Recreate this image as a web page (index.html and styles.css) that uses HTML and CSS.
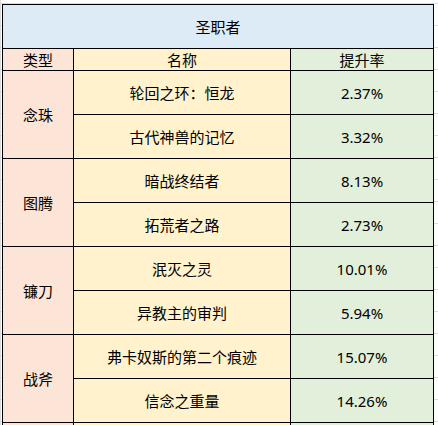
FILE: index.html
```html
<!DOCTYPE html>
<html lang="zh">
<head>
<meta charset="utf-8">
<title>圣职者</title>
<link rel="stylesheet" href="styles.css">
</head>
<body>
<div class="sheet">
<table class="grid">
  <colgroup>
    <col class="c-type">
    <col class="c-name">
    <col class="c-rate">
  </colgroup>
  <tr class="r-title"><td class="title" colspan="3">圣职者</td></tr>
  <tr class="r-head">
    <td class="type">类型</td>
    <td class="name">名称</td>
    <td class="rate">提升率</td>
  </tr>
  <tr class="r-data"><td class="type" rowspan="2">念珠</td><td class="name">轮回之环：恒龙</td><td class="rate">2.37%</td></tr>
  <tr class="r-data"><td class="name">古代神兽的记忆</td><td class="rate">3.32%</td></tr>
  <tr class="r-data"><td class="type" rowspan="2">图腾</td><td class="name">暗战终结者</td><td class="rate">8.13%</td></tr>
  <tr class="r-data"><td class="name">拓荒者之路</td><td class="rate">2.73%</td></tr>
  <tr class="r-data"><td class="type" rowspan="2">镰刀</td><td class="name">泯灭之灵</td><td class="rate">10.01%</td></tr>
  <tr class="r-data"><td class="name">异教主的审判</td><td class="rate">5.94%</td></tr>
  <tr class="r-data"><td class="type" rowspan="2">战斧</td><td class="name">弗卡奴斯的第二个痕迹</td><td class="rate">15.07%</td></tr>
  <tr class="r-data"><td class="name">信念之重量</td><td class="rate">14.26%</td></tr>
  <tr class="r-data"><td class="type"></td><td class="name"></td><td class="rate"></td></tr>
</table>
</div>
</body>
</html>
```

FILE: styles.css
```css
html, body {
  margin: 0;
  padding: 0;
  overflow: hidden;
}
body {
  width: 438px;
  height: 425px;
  background-color: #ffffff;
  background-image:
    linear-gradient(to right, transparent 0, transparent 0px, #dadada 0px, #dadada 1px, transparent 1px),
    repeating-linear-gradient(to bottom, transparent 0, transparent 3px, #dadada 3px, #dadada 4px, transparent 4px, transparent 22px);
  background-size: 438px 425px, 438px 425px;
  font-family: "Noto Sans", "Noto Sans CJK SC", sans-serif;
  color: #000;
}
.sheet {
  padding: 4px 0 0 2px;
  position: relative;
}
.grid {
  border-collapse: collapse;
  table-layout: fixed;
  width: 432px;
  font-size: 15px;
}
.c-type { width: 71px; }
.c-name { width: 217px; }
.c-rate { width: 143px; }
.grid td {
  border: 1px solid #000;
  padding: 0;
  text-align: center;
  vertical-align: middle;
  line-height: 20px;
  white-space: nowrap;
}
.r-title td { height: 43px; }
.r-head td { height: 21px; }
.r-data td { height: 43px; }
.title { background: #ddebf7; }
.type { background: #fce4d6; }
.name { background: #fff2cc; }
.rate { background: #e2efda; }
```
